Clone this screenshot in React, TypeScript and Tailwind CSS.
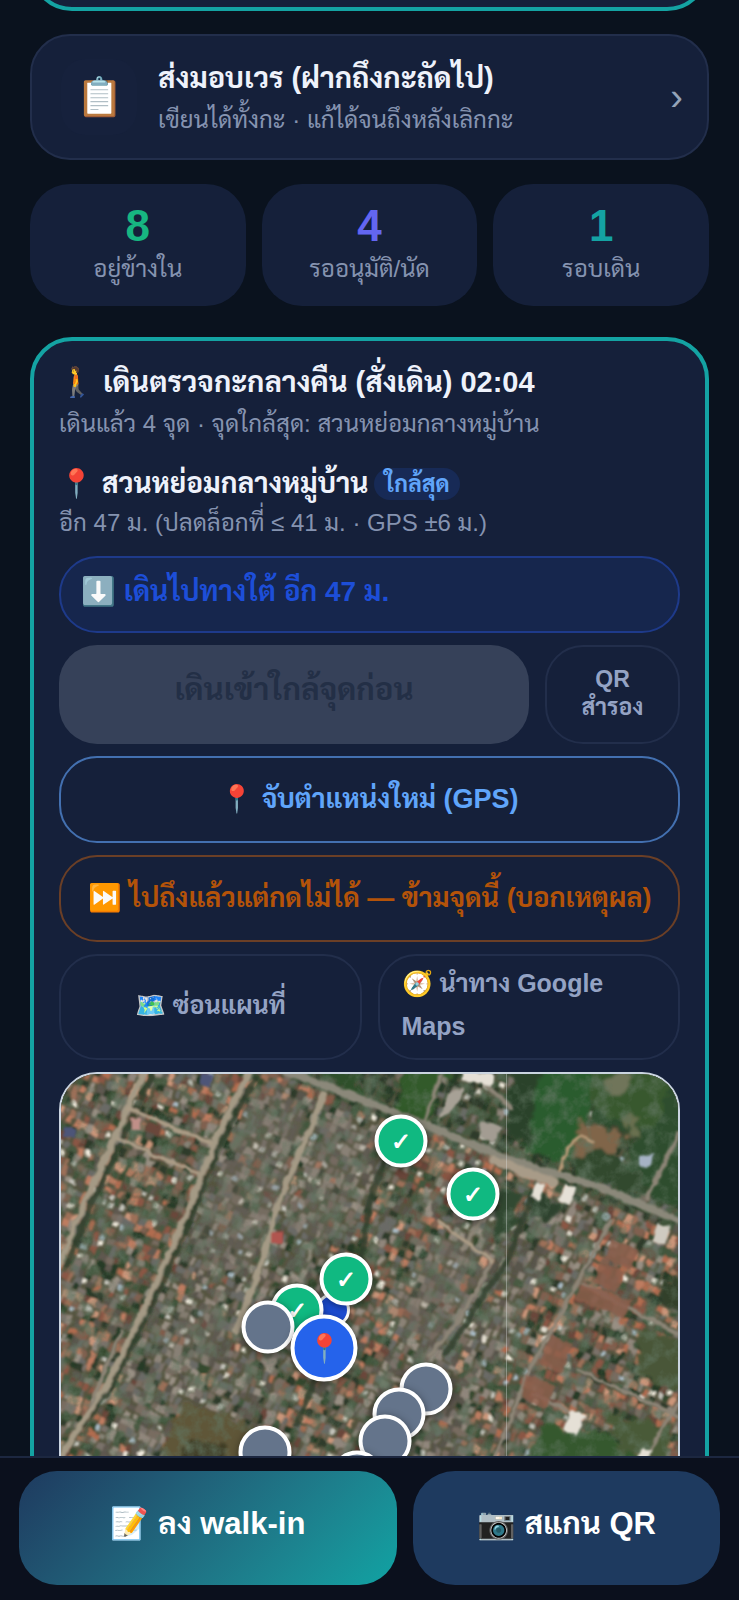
import type { ReactNode } from "react";

type PinKind = "done" | "todo" | "target" | "me";

interface Pin {
  id: string;
  kind: PinKind;
  x: number;
  y: number;
}

const STATS = [
  { label: "อยู่ข้างใน", value: 8, color: "text-[#17b681]" },
  { label: "รออนุมัติ/นัด", value: 4, color: "text-[#6366f1]" },
  { label: "รอบเดิน", value: 1, color: "text-[#14a3a3]" },
];

// Pin centres on the map canvas, listed in stacking order.
const PINS: Pin[] = [
  { id: "me", kind: "me", x: 272, y: 236 },
  { id: "gate", kind: "done", x: 340, y: 67 },
  { id: "north", kind: "done", x: 412, y: 120 },
  { id: "hall", kind: "done", x: 285, y: 205 },
  { id: "pool", kind: "done", x: 236, y: 236 },
  { id: "p5", kind: "todo", x: 207, y: 253 },
  { id: "garden", kind: "target", x: 263, y: 274 },
  { id: "p7", kind: "todo", x: 365, y: 315 },
  { id: "p8", kind: "todo", x: 338, y: 340 },
  { id: "p9", kind: "todo", x: 324, y: 367 },
  { id: "p10", kind: "todo", x: 204, y: 378 },
  { id: "p11", kind: "todo", x: 296, y: 403 },
];

const PIN_CLASS: Record<PinKind, string> = {
  done: "size-[53px] border-4 bg-[#10b981] text-[24px]",
  todo: "size-[53px] border-4 bg-[#64748b]",
  target: "size-[67px] border-4 bg-[#2563eb] text-[28px]",
  me: "size-[34px] border-3 bg-[#1d4ed8]",
};

const PIN_TEXT: Record<PinKind, string> = {
  done: "✓",
  todo: "",
  target: "📍",
  me: "",
};

const MAP_W = 617;
const MAP_H = 460;

const RED_ROOFS = ["#b06c50", "#8a5744", "#bd7c60", "#6a463a", "#9c6f59", "#80604f", "#cb967a"];
const GREY_ROOFS = ["#7a726a", "#5f5850", "#90867b", "#58544b", "#988f83", "#786c61", "#6b6b66"];
const TREES = ["#34492f", "#43563c", "#263a26", "#4a5a42", "#2f3b2a"];
const BRIGHT = ["#e2dccf", "#c2c2ba", "#f0eadd", "#a8bac4"];

function createRandom(seed: number) {
  let s = seed;
  return () => {
    s = (s * 1664525 + 1013904223) % 4294967296;
    return s / 4294967296;
  };
}

function pick(list: string[], r: number) {
  return list[Math.floor(r * list.length)];
}

// y of the main road that crosses the top right part of the map
function mainRoadY(x: number) {
  return (x - 227) * 0.375;
}

function isGreyBlock(x: number, y: number) {
  const u = x + y * 0.44;
  if (u > 192 && u < 355 && y > 20) return true;
  return u > 440 && u < 560 && y > 130;
}

function roofColor(x: number, y: number, row: number, r: number, r2: number) {
  if (r2 > 0.94) return pick(BRIGHT, r);
  if (x > 227 && y < mainRoadY(x)) return r2 > 0.78 ? pick(GREY_ROOFS, r) : pick(TREES, r);
  const grey = isGreyBlock(x, y);
  // every third row is a lane lined with trees
  if (row % 3 === 0) return r2 < (grey ? 0.2 : 0.6) ? pick(TREES, r) : pick(GREY_ROOFS, r);
  if (r2 < 0.1) return pick(TREES, r);
  if (grey) return r2 > 0.85 ? pick(RED_ROOFS, r) : pick(GREY_ROOFS, r);
  return r2 < 0.36 ? pick(GREY_ROOFS, r) : pick(RED_ROOFS, r);
}

function buildRoofs() {
  const rand = createRandom(47);
  const cos = Math.cos((23 * Math.PI) / 180);
  const sin = Math.sin((23 * Math.PI) / 180);
  const roofs = [];
  for (let row = 0; row < 90; row += 1) {
    const v = -270 + row * 8;
    for (let u = -20; u < 780; u += 7) {
      const x = u * cos - v * sin;
      const y = u * sin + v * cos;
      const r = rand();
      const r2 = rand();
      const w = 4 + rand() * 5;
      const h = 5 + rand() * 6;
      const du = rand() * 3;
      const dv = rand() * 3;
      if (x < -10 || x > MAP_W + 10 || y < -10 || y > MAP_H + 10) continue;
      const fill = roofColor(x, y, row, r, r2);
      const small = BRIGHT.includes(fill);
      roofs.push({ u: u + du, v: v + dv, w: small ? 5 : w, h: small ? 5 : h, fill });
    }
  }
  return roofs;
}

const ROOFS = buildRoofs();

function SatelliteTiles() {
  return (
    <svg
      className="absolute inset-0 size-full"
      viewBox={`0 0 ${MAP_W} ${MAP_H}`}
      preserveAspectRatio="xMidYMin slice"
      aria-hidden="true"
    >
      <defs>
        <filter id="soft" x="0" y="0" width="100%" height="100%">
          <feTurbulence type="fractalNoise" baseFrequency="0.09" numOctaves="2" seed="9" result="n" />
          <feDisplacementMap in="SourceGraphic" in2="n" scale="6" xChannelSelector="R" yChannelSelector="G" result="d" />
          <feGaussianBlur in="d" stdDeviation="1.1" />
        </filter>
        <filter id="field" x="-20%" y="-20%" width="140%" height="140%">
          <feTurbulence type="fractalNoise" baseFrequency="0.07" numOctaves="3" seed="2" result="n" />
          <feDisplacementMap in="SourceGraphic" in2="n" scale="22" xChannelSelector="R" yChannelSelector="G" result="d" />
          <feGaussianBlur in="d" stdDeviation="1.5" />
        </filter>
        <filter id="grain" x="0" y="0" width="100%" height="100%">
          <feTurbulence type="fractalNoise" baseFrequency="0.06" numOctaves="4" seed="4" />
          <feColorMatrix values="0 0 0 0 0.12  0 0 0 0 0.18  0 0 0 0 0.12  2.6 0 0 0 -1.15" />
        </filter>
      </defs>
      <rect width={MAP_W} height={MAP_H} fill="#55543f" />
      <g filter="url(#soft)">
        <g transform="rotate(23)">
          {ROOFS.map((roof) => (
            <rect
              key={`${roof.u}:${roof.v}`}
              x={roof.u}
              y={roof.v}
              width={roof.w}
              height={roof.h}
              fill={roof.fill}
            />
          ))}
        </g>
        <g stroke="none" opacity="0.35">
          <path d="M196 10 L250 30 L190 190 L130 180 Z" fill="#726c62" />
          <path d="M270 40 L320 60 L270 170 L225 150 Z" fill="#706a60" />
          <path d="M380 160 L425 195 L370 270 L320 240 Z" fill="#746b60" />
          <path d="M120 230 L170 240 L150 290 L90 280 Z" fill="#6c675e" />
        </g>
      </g>
      <g filter="url(#field)">
        <path d="M262 -4 L306 -4 L298 20 L288 20 Z" fill="#2e4f29" />
        <path d="M345 -4 L388 -4 L364 50 L332 34 Z" fill="#315a2b" />
        <path d="M478 -8 L540 -8 L528 40 L508 90 L462 78 L452 50 Z" fill="#2a5c2e" />
        <path d="M538 -8 L630 -8 L630 140 L560 114 L574 60 L532 46 Z" fill="#2f4d2e" />
        <path d="M528 -8 L610 -8 L596 58 L536 38 Z" fill="#37592f" />
        <path d="M546 0 L566 0 L560 22 L544 18 Z" fill="#70745a" />
        <path d="M566 36 L584 44 L580 62 L562 54 Z" fill="#69704f" />
        <path d="M522 48 L564 58 L556 74 L530 92 L508 84 Z" fill="#80654a" />
        <path d="M450 -8 L480 -8 L468 74 L446 60 Z" fill="#2a432b" />
        <path d="M500 84 L552 76 L600 128 L520 104 Z" fill="#33492f" />
        <path d="M124 326 L190 354 L176 400 L96 410 L106 360 Z" fill="#5f5638" />
        <path d="M130 362 L164 374 L156 394 L122 386 Z" fill="#403d26" />
        <path d="M482 350 L540 360 L582 384 L590 420 L450 420 Z" fill="#34582e" />
        <path d="M540 336 L612 354 L600 384 L560 376 Z" fill="#4a5a37" />
        <path d="M576 250 L622 270 L622 320 L580 300 Z" fill="#485737" />
        <path d="M604 200 L626 212 L626 240 L602 232 Z" fill="#30402b" />
        <path d="M440 110 L462 122 L450 160 L430 176 Z" fill="#314a30" />
        <path d="M472 118 L500 130 L488 150 L464 140 Z" fill="#2f432f" />
      </g>
      <rect width={MAP_W} height={MAP_H} filter="url(#grain)" opacity="0.75" />
      <g filter="url(#soft)">
        <g fill="none" strokeLinecap="round" strokeLinejoin="round">
          <g stroke="#2f402d" strokeWidth="6" opacity="0.8">
            <path d="M92 2 L74 36 L58 72 L30 130 L6 190" />
            <path d="M194 4 L160 67 L130 144 L96 220 L52 310 L10 368" />
            <path d="M476 110 L444 190 L384 280" />
            <path d="M334 60 L308 130 L300 190" />
            <path d="M260 290 L236 350" />
          </g>
          <g stroke="#a49a85" strokeWidth="6">
            <path d="M84 -4 L67 34 L50 72 L23 130 L-2 190" />
            <path d="M189 -4 L154 67 L124 144 L90 220 L46 310 L-2 386" />
            <path d="M263 20 L242 72 L221 120 L198 196 L175 257" />
          </g>
          <g stroke="#8d8577" strokeWidth="4">
            <path d="M549 147 L510 220 L465 304 L432 390" />
            <path d="M431 187 L398 246 L368 282" />
            <path d="M621 324 L602 352 L580 396" />
            <path d="M422 8 L450 34" />
            <path d="M380 2 L362 50" />
            <path d="M618 60 L586 124" />
            <path d="M522 210 L621 262" />
            <path d="M518 296 L621 344" />
            <path d="M472 320 L524 344" />
            <path d="M402 176 L424 140" />
            <path d="M60 258 L30 330" />
          </g>
          <g stroke="#ab9c86" strokeWidth="4">
            <path d="M67 34 L108 52 L149 69" />
            <path d="M57 64 L96 82 L137 99" />
            <path d="M377 147 L431 187" />
            <path d="M496 102 L508 72 L520 62 L532 68" stroke="#b89a78" strokeWidth="3" />
          </g>
          <path d="M218 -6 L343 42 L444 84 L541 114 L626 150" stroke="#8b887a" strokeWidth="8" />
          <path d="M432 86 L492 108" stroke="#a89b88" strokeWidth="9" />
        </g>
        <g fill="#e5e0d6">
          <rect x="402" y="-2" width="30" height="11" transform="rotate(8 415 4)" />
          <rect x="472" y="108" width="11" height="16" transform="rotate(22 474 114)" />
          <rect x="502" y="110" width="12" height="18" transform="rotate(22 504 116)" />
          <rect x="594" y="150" width="13" height="20" transform="rotate(18 600 160)" fill="#cfcac0" />
          <rect x="507" y="336" width="15" height="22" transform="rotate(22 512 344)" />
          <rect x="578" y="374" width="11" height="22" transform="rotate(22 581 382)" />
          <path d="M386 20 L404 14 L398 30 L376 48 Z" fill="#a7a196" />
          <path d="M420 48 L442 52 L432 70 L418 62 Z" fill="#a39c92" />
          <rect x="210" y="158" width="12" height="12" fill="#b0544f" />
          <rect x="70" y="44" width="10" height="12" fill="#c08f88" />
        </g>
        <g fill="#8c5f4c" opacity="0.85">
          <path d="M552 166 L578 176 L568 196 L544 184 Z" />
          <path d="M540 188 L564 198 L554 220 L532 208 Z" />
          <path d="M520 210 L572 226 L562 244 L514 226 Z" />
          <path d="M490 262 L512 270 L500 300 L478 290 Z" />
          <path d="M466 300 L494 312 L484 336 L460 324 Z" />
        </g>
        <g fill="#4d5478">
          <rect x="140" y="0" width="11" height="12" transform="rotate(15 145 6)" />
          <rect x="2" y="54" width="13" height="9" />
          <path d="M578 82 L592 80 L590 92 L578 94 Z" fill="#a5b2c4" />
        </g>
      </g>
      <path d={`M445.5 0 V${MAP_H}`} stroke="#e5e7eb" strokeOpacity="0.35" />
    </svg>
  );
}

function PatrolMap() {
  return (
    <div className="relative h-[460px] overflow-hidden rounded-[38px] border-2 border-[#cbd5e1] bg-[#4d4f3f]">
      <SatelliteTiles />
      {PINS.map((pin) => (
        <span
          key={pin.id}
          className={`absolute flex -translate-x-1/2 -translate-y-1/2 items-center justify-center rounded-full border-white leading-none font-bold text-white shadow-[0_2px_8px_rgba(0,0,0,0.45)] ${PIN_CLASS[pin.kind]}`}
          style={{ left: pin.x, top: pin.y }}
        >
          {PIN_TEXT[pin.kind]}
        </span>
      ))}
    </div>
  );
}

function OutlineButton({ className, children }: { className: string; children: ReactNode }) {
  return (
    <button
      type="button"
      className={`rounded-[38px] border-2 font-bold ${className}`}
    >
      {children}
    </button>
  );
}

function HandoverCard() {
  return (
    <button
      type="button"
      className="flex items-center gap-[21px] rounded-[40px] border-2 border-[#222e4b] bg-[#15203a] py-[17px] pr-6 pl-[29px] text-left"
    >
      <span className="flex size-[76px] shrink-0 items-center justify-center rounded-3xl bg-[#16213c] text-[38px] leading-none">
        📋
      </span>
      <span className="flex min-w-0 flex-1 flex-col pt-1">
        <span className="text-[29px] leading-[42px] font-bold text-[#eef2fb]">
          ส่งมอบเวร (ฝากถึงกะถัดไป)
        </span>
        <span className="text-[24px] leading-[42px] text-[#8593b0]">
          เขียนได้ทั้งกะ · แก้ได้จนถึงหลังเลิกกะ
        </span>
      </span>
      <span className="text-[38px] leading-none text-[#94a3b8]">›</span>
    </button>
  );
}

function PatrolCard() {
  return (
    <section className="rounded-[42px] border-4 border-[#14a3a3] bg-[#15203a] px-[25px] pt-5 pb-7">
      <h2 className="text-[29px] leading-[42px] font-bold text-[#eef2fb]">
        🚶 เดินตรวจกะกลางคืน (สั่งเดิน) 02:04
      </h2>
      <p className="text-[24px] leading-[42px] text-[#8593b0]">
        เดินแล้ว 4 จุด · จุดใกล้สุด: สวนหย่อมกลางหมู่บ้าน
      </p>

      <div className="mt-[18px] flex items-center gap-1.5">
        <h3 className="text-[28px] leading-[42px] font-bold text-[#eef2fb]">
          📍 สวนหย่อมกลางหมู่บ้าน
        </h3>
        <span className="rounded-full bg-[#172a56] px-2.5 text-[23px] leading-[32px] font-bold text-[#60a5fa]">
          ใกล้สุด
        </span>
      </div>
      <p className="text-[24px] leading-[36px] text-[#8593b0]">
        อีก 47 ม. (ปลดล็อกที่ ≤ 41 ม. · GPS ±6 ม.)
      </p>

      <div className="mt-[15px] flex flex-col gap-3">
        <p className="rounded-[38px] border-2 border-[#1e3a8a] bg-[#16264d] px-5 pt-3 pb-[17px] text-[28px] leading-[44px] font-bold text-[#1d4ed8]">
          ⬇️ เดินไปทางใต้ อีก 47 ม.
        </p>
        <div className="flex gap-4">
          <button
            type="button"
            disabled
            className="min-h-[99px] flex-1 rounded-[38px] bg-[#364159] pb-2 text-[31px] font-bold text-[#232f46]"
          >
            เดินเข้าใกล้จุดก่อน
          </button>
          <OutlineButton className="w-[135px] border-[#222e4b] px-6 pb-1 text-[23px] leading-[28px] text-[#94a3c4]">
            QR สำรอง
          </OutlineButton>
        </div>
        <OutlineButton className="h-[87px] border-[#4370b0] text-[27px] text-[#60a5fa]">
          📍 จับตำแหน่งใหม่ (GPS)
        </OutlineButton>
        <OutlineButton className="h-[87px] border-[#6b3f26] text-[27px] text-[#b45309]">
          ⏭️ ไปถึงแล้วแต่กดไม่ได้ — ข้ามจุดนี้ (บอกเหตุผล)
        </OutlineButton>
        <div className="grid grid-cols-2 gap-4">
          <OutlineButton className="border-[#222e4b] pb-1 text-[25px] leading-[43px] text-[#94a3c4]">
            🗺️ ซ่อนแผนที่
          </OutlineButton>
          <a
            href="#navigate"
            className="rounded-[38px] border-2 border-[#222e4b] px-[22px] pt-1.5 pb-2.5 text-[25px] leading-[43px] font-bold text-[#94a3c4]"
          >
            🧭 นำทาง Google Maps
          </a>
        </div>
        <PatrolMap />
      </div>
    </section>
  );
}

export default function App() {
  return (
    <div
      lang="th"
      className="flex h-screen flex-col overflow-hidden bg-[#0a121e] font-['Liberation_Sans','Sarabun',sans-serif]"
    >
      <main className="flex min-h-0 flex-1 flex-col overflow-y-auto px-[30px] [scrollbar-width:none] *:shrink-0">
        <section className="-mt-[109px] h-[120px] rounded-[42px] border-4 border-[#14a3a3] bg-[#15203a]" />

        <div className="mt-[23px] flex flex-col">
          <HandoverCard />
        </div>

        <div className="mt-6 grid grid-cols-3 gap-4">
          {STATS.map((stat) => (
            <div
              key={stat.label}
              className="rounded-[40px] bg-[#15203a] pt-5 pb-4 text-center"
            >
              <div className={`text-[44px] leading-[44px] font-bold ${stat.color}`}>
                {stat.value}
              </div>
              <div className="text-[24px] leading-[42px] text-[#8593b0]">{stat.label}</div>
            </div>
          ))}
        </div>

        <div className="mt-[31px]">
          <PatrolCard />
        </div>
      </main>

      <nav className="grid shrink-0 grid-cols-[1.23fr_1fr] gap-4 border-t-2 border-[#1c2740] bg-[#0b101d] px-[19px] pt-[13px] pb-[15px]">
        <button
          type="button"
          className="h-[114px] rounded-[38px] bg-linear-135 from-[#1e3a5f] to-[#0fa3a3] pb-2 text-[31px] font-bold text-white"
        >
          📝 ลง walk-in
        </button>
        <button
          type="button"
          className="h-[114px] rounded-[42px] bg-[#1e3a5f] pb-2 text-[31px] font-bold text-white"
        >
          📷 สแกน QR
        </button>
      </nav>
    </div>
  );
}
